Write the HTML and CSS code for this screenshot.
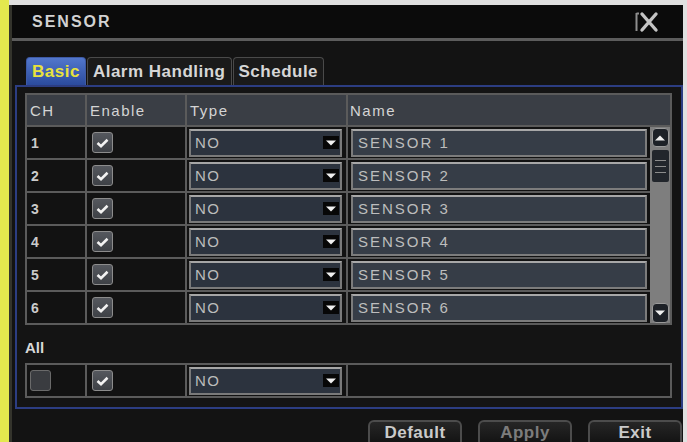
FILE: index.html
```html
<!DOCTYPE html>
<html>
<head>
<meta charset="utf-8">
<link rel="stylesheet" href="styles.css">
</head>
<body>
<div class="stripe"></div>
<div class="screen">
  <div class="titlebar">
    <span class="title">SENSOR</span>
    <svg class="close" width="26" height="22" viewBox="0 0 26 22">
      <path d="M2.5 2 V20 M2.5 2.5 H5" stroke="#8e8e8e" stroke-width="2" fill="none"/>
      <path d="M8 3 L22 19 M22 3 L8 19" stroke="#c4c4c4" stroke-width="3.4" fill="none" stroke-linecap="round"/>
    </svg>
  </div>
  <div class="content">
    <div class="tabs">
      <div class="tab active">Basic</div>
      <div class="tab">Alarm Handling</div>
      <div class="tab">Schedule</div>
    </div>
    <div class="panel">
      <div class="grid">
        <div class="cell head">CH</div>
        <div class="cell head">Enable</div>
        <div class="cell head">Type</div>
        <div class="cell head name-head">Name</div>

        <div class="cell ch">1</div>
        <div class="cell en"><span class="chk on"><svg width="13" height="10" viewBox="0 0 13 10"><path d="M1.5 5 L5 8.2 L11.5 1.8" stroke="#f2f2f2" stroke-width="2.6" fill="none"/></svg></span></div>
        <div class="cell ty"><div class="drop"><span>NO</span><i class="arrow"><svg width="10" height="6" viewBox="0 0 10 6"><path d="M0 0.5 H10 L5 5.5 Z" fill="#f0f0f0"/></svg></i></div></div>
        <div class="cell nm"><div class="field">SENSOR 1</div></div>
        <div class="cell scroll">
          <div class="sbtn up"><svg width="10" height="6" viewBox="0 0 10 6"><path d="M0 5.5 H10 L5 0.5 Z" fill="#f0f0f0"/></svg></div>
          <div class="thumb"><b></b><b></b><b></b></div>
          <div class="track"></div>
          <div class="sbtn down"><svg width="10" height="6" viewBox="0 0 10 6"><path d="M0 0.5 H10 L5 5.5 Z" fill="#f0f0f0"/></svg></div>
        </div>

        <div class="cell ch">2</div>
        <div class="cell en"><span class="chk on"><svg width="13" height="10" viewBox="0 0 13 10"><path d="M1.5 5 L5 8.2 L11.5 1.8" stroke="#f2f2f2" stroke-width="2.6" fill="none"/></svg></span></div>
        <div class="cell ty"><div class="drop"><span>NO</span><i class="arrow"><svg width="10" height="6" viewBox="0 0 10 6"><path d="M0 0.5 H10 L5 5.5 Z" fill="#f0f0f0"/></svg></i></div></div>
        <div class="cell nm"><div class="field">SENSOR 2</div></div>

        <div class="cell ch">3</div>
        <div class="cell en"><span class="chk on"><svg width="13" height="10" viewBox="0 0 13 10"><path d="M1.5 5 L5 8.2 L11.5 1.8" stroke="#f2f2f2" stroke-width="2.6" fill="none"/></svg></span></div>
        <div class="cell ty"><div class="drop"><span>NO</span><i class="arrow"><svg width="10" height="6" viewBox="0 0 10 6"><path d="M0 0.5 H10 L5 5.5 Z" fill="#f0f0f0"/></svg></i></div></div>
        <div class="cell nm"><div class="field">SENSOR 3</div></div>

        <div class="cell ch">4</div>
        <div class="cell en"><span class="chk on"><svg width="13" height="10" viewBox="0 0 13 10"><path d="M1.5 5 L5 8.2 L11.5 1.8" stroke="#f2f2f2" stroke-width="2.6" fill="none"/></svg></span></div>
        <div class="cell ty"><div class="drop"><span>NO</span><i class="arrow"><svg width="10" height="6" viewBox="0 0 10 6"><path d="M0 0.5 H10 L5 5.5 Z" fill="#f0f0f0"/></svg></i></div></div>
        <div class="cell nm"><div class="field">SENSOR 4</div></div>

        <div class="cell ch">5</div>
        <div class="cell en"><span class="chk on"><svg width="13" height="10" viewBox="0 0 13 10"><path d="M1.5 5 L5 8.2 L11.5 1.8" stroke="#f2f2f2" stroke-width="2.6" fill="none"/></svg></span></div>
        <div class="cell ty"><div class="drop"><span>NO</span><i class="arrow"><svg width="10" height="6" viewBox="0 0 10 6"><path d="M0 0.5 H10 L5 5.5 Z" fill="#f0f0f0"/></svg></i></div></div>
        <div class="cell nm"><div class="field">SENSOR 5</div></div>

        <div class="cell ch">6</div>
        <div class="cell en"><span class="chk on"><svg width="13" height="10" viewBox="0 0 13 10"><path d="M1.5 5 L5 8.2 L11.5 1.8" stroke="#f2f2f2" stroke-width="2.6" fill="none"/></svg></span></div>
        <div class="cell ty"><div class="drop"><span>NO</span><i class="arrow"><svg width="10" height="6" viewBox="0 0 10 6"><path d="M0 0.5 H10 L5 5.5 Z" fill="#f0f0f0"/></svg></i></div></div>
        <div class="cell nm"><div class="field">SENSOR 6</div></div>
      </div>

      <div class="all-label">All</div>

      <div class="grid all-grid">
        <div class="cell en first"><span class="chk"></span></div>
        <div class="cell en"><span class="chk on"><svg width="13" height="10" viewBox="0 0 13 10"><path d="M1.5 5 L5 8.2 L11.5 1.8" stroke="#f2f2f2" stroke-width="2.6" fill="none"/></svg></span></div>
        <div class="cell ty"><div class="drop"><span>NO</span><i class="arrow"><svg width="10" height="6" viewBox="0 0 10 6"><path d="M0 0.5 H10 L5 5.5 Z" fill="#f0f0f0"/></svg></i></div></div>
        <div class="cell nm last"></div>
      </div>
    </div>
    <div class="buttons">
      <div class="btn">Default</div>
      <div class="btn dim">Apply</div>
      <div class="btn">Exit</div>
    </div>
  </div>
</div>
<div class="edge"></div>
</body>
</html>
```

FILE: styles.css
```css
* { box-sizing: border-box; }
html, body { margin: 0; padding: 0; }
body {
  display: flex;
  height: 442px;
  overflow: hidden;
  background: #e0e0e0;
  font-family: "Liberation Sans", Arial, sans-serif;
  color: #cfcfcf;
}
.stripe {
  flex: none;
  width: 9px;
  background: #e3e84e;
}
.screen {
  flex: none;
  width: 674px;
  height: 437px;
  margin-top: 5px;
  border-left: 3px solid #34342c;
  background: #131313;
}
.edge { flex: 1; }

.titlebar {
  height: 36px;
  background: #0b0b0b;
  border-bottom: 3px solid #5c5c5c;
  display: flex;
  align-items: center;
  justify-content: space-between;
  padding: 0 23px 0 20px;
}
.title {
  font-size: 16px;
  font-weight: bold;
  letter-spacing: 2px;
  color: #d2d2d2;
}
.close { display: block; }

.tabs {
  display: flex;
  gap: 1px;
  margin: 16px 0 0 14px;
  height: 28px;
}
.tab {
  height: 28px;
  padding: 0 5px;
  border: 1px solid #4a4a4a;
  border-bottom: none;
  border-radius: 4px 4px 0 0;
  background: #1a1a1a;
  font-size: 17px;
  font-weight: bold;
  letter-spacing: 0.5px;
  line-height: 27px;
  color: #d6d6d6;
}
.tab.active {
  background: linear-gradient(#5277cc, #2b4b9d);
  border-color: #3e5aa6;
  color: #e8e23c;
}

.panel {
  margin-left: 3px;
  border: 2px solid #2c3d82;
  padding: 6px 9px 9px 8px;
  background: #141414;
}

.grid {
  display: grid;
  grid-template-columns: 60px 100px 161px 302px 22px;
  grid-template-rows: 32px repeat(6, 33px);
  border-left: 2px solid #5b5b5b;
  border-top: 2px solid #5b5b5b;
  width: 647px;
}
.cell {
  border-right: 2px solid #5b5b5b;
  border-bottom: 2px solid #5b5b5b;
  background: #121212;
  display: flex;
  align-items: center;
}
.head {
  background: #3a3e45;
  font-size: 15px;
  letter-spacing: 1.5px;
  padding-left: 3px;
  color: #d4d4d4;
}
.name-head { grid-column: 4 / span 2; padding-left: 2px; }
.ch {
  font-size: 14px;
  font-weight: bold;
  padding-left: 4px;
  color: #cbcbcb;
}
.en { padding-left: 5px; }
.chk {
  width: 21px;
  height: 21px;
  border: 1px solid #8c8c8c;
  border-radius: 3px;
  background: linear-gradient(#55585e, #3e4146);
  display: flex;
  align-items: center;
  justify-content: center;
}
.first .chk { background: #3a3c40; border-color: #6a6a6a; }

.ty { padding-left: 2px; }
.drop {
  width: 153px;
  height: 28px;
  border: 2px solid #7a7a7a;
  border-top-color: #a6a6a6;
  background: #2c333e;
  display: flex;
  align-items: center;
  padding-left: 4px;
  font-size: 15px;
  letter-spacing: 1.5px;
  color: #bcbcbc;
}
.arrow {
  margin-left: auto;
  margin-right: 1px;
  width: 16px;
  height: 13px;
  background: #070707;
  display: flex;
  align-items: center;
  justify-content: center;
}
.arrow svg { display: block; }

.nm { border-right: none; padding-left: 3px; }
.field {
  width: 296px;
  height: 28px;
  border: 2px solid #7c7c7c;
  border-top-color: #a8a8a8;
  background: #363d47;
  padding-left: 5px;
  display: flex;
  align-items: center;
  font-size: 15px;
  letter-spacing: 2px;
  color: #bdbdbd;
}

.scroll {
  grid-column: 5;
  grid-row: 2 / span 6;
  background: #7e7e7e;
  flex-direction: column;
  align-items: center;
  padding: 1px 0 0 0;
}
.sbtn {
  width: 17px;
  height: 19px;
  border-radius: 4px;
  background: #1d2127;
  border: 1px solid #9a9a9a;
  display: flex;
  align-items: center;
  justify-content: center;
  flex: none;
}
.thumb {
  margin-top: 3px;
  width: 17px;
  height: 32px;
  background: #22262c;
  border-radius: 2px;
  display: flex;
  flex-direction: column;
  justify-content: center;
  align-items: center;
  gap: 5px;
  flex: none;
}
.thumb b {
  display: block;
  width: 11px;
  height: 1px;
  background: #8c8c8c;
}
.track { flex: 1; }
.down { height: 20px; }

.all-label {
  padding: 13px 0 5px 0;
  line-height: 20px;
  font-size: 15px;
  font-weight: bold;
  color: #d8d8d8;
}
.all-grid {
  grid-template-columns: 60px 100px 161px 324px;
  grid-template-rows: 33px;
}
.all-grid .first { padding-left: 3px; }
.all-grid .last { border-right: 2px solid #5b5b5b; }

.buttons {
  display: flex;
  justify-content: flex-end;
  gap: 16px;
  margin-top: 11px;
  padding-right: 1px;
}
.btn {
  width: 94px;
  height: 22px;
  border: 2px solid #4c4c4c;
  border-bottom: none;
  border-radius: 6px 6px 0 0;
  background: linear-gradient(#262626, #141414);
  text-align: center;
  padding-top: 2px;
  font-size: 17px;
  line-height: 18px;
  font-weight: bold;
  letter-spacing: 0.5px;
  color: #cacaca;
}
.btn.dim { color: #7c7c7c; }
```
